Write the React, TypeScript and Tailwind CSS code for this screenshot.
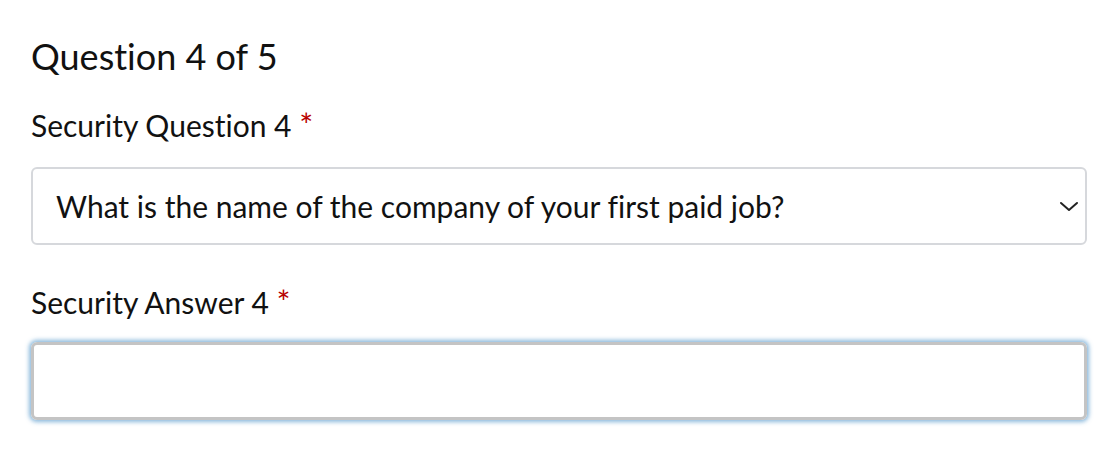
import React from "react";

export default function App() {
  return (
    <div className="w-[1112px] h-[474px] bg-white text-[#111] [font-variant-ligatures:none]" style={{ fontFamily: "Lato, 'Liberation Sans', sans-serif" }}>
      <div className="pl-[31px] pr-[25px] pt-[34px]">
        <h1 className="text-[36px] leading-[44px] font-normal">Question 4 of 5</h1>
        <div className="mt-[29px]">
          <label className="block text-[30px] leading-[36px]">
            Security Question 4 <span className="text-[#b80000] text-[33px] leading-none">*</span>
          </label>
          <div className="mt-[24px] relative h-[78px] rounded-[6px] border-2 border-[#d6d8dc] flex items-center pl-[23px]">
            <span className="text-[30px] leading-[36px]">What is the name of the company of your first paid job?</span>
            <svg className="absolute right-[6px] top-1/2 -translate-y-1/2" width="20" height="12" viewBox="0 0 20 12" fill="none">
              <path d="M2 3l8 7 8-7" stroke="#222" strokeWidth="2" strokeLinecap="round" strokeLinejoin="round" />
            </svg>
          </div>
        </div>
        <div className="mt-[39px]">
          <label className="block text-[30px] leading-[36px]">
            Security Answer 4 <span className="text-[#b80000] text-[33px] leading-none">*</span>
          </label>
          <div className="mt-[22px] h-[78px] rounded-[6px] border-[3px] border-[#c4c4c4] shadow-[0_0_4px_2px_rgba(90,155,205,0.7)]"></div>
        </div>
      </div>
    </div>
  );
}
